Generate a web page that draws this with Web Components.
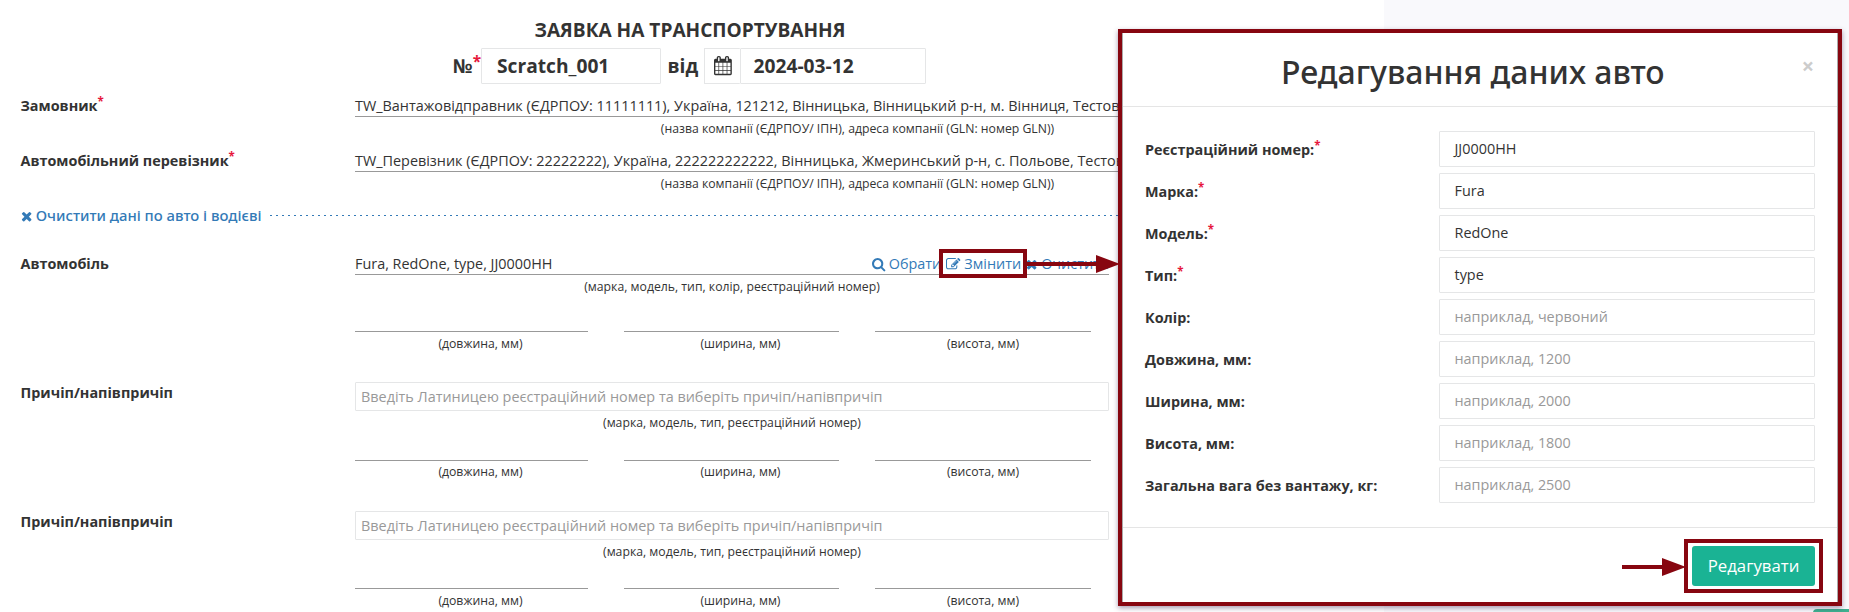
<!DOCTYPE html>
<html lang="uk">
<head>
<meta charset="utf-8">
<title>Заявка на транспортування</title>
<style>
html, body { margin: 0; height: 612px; overflow: hidden; background: #fff; }
body { font: 14.4px/20px "Open Sans", "Noto Sans", sans-serif; color: #333; }
</style>
</head>
<body>
<app-page></app-page>
<script>
const define = (name, html) => customElements.define(name, class extends HTMLElement {
  connectedCallback() {
    if (this.shadowRoot) return;
    const t = document.createElement('template');
    t.innerHTML = typeof html === 'function' ? html(this) : html;
    this.attachShadow({ mode: 'open' }).append(t.content.cloneNode(true));
  }
});

/* Glyphs on the Font Awesome 4 grid: 1792 units per em, y axis flipped */
const ICONS = {
  times: [1408, 'M1298 214q0-40-28-68l-136-136q-28-28-68-28t-68 28l-294 294-294-294q-28-28-68-28t-68 28l-136 136q-28 28-28 68t28 68l294 294-294 294q-28 28-28 68t28 68l136 136q28 28 68 28t68-28l294-294 294 294q28 28 68 28t68-28l136-136q28-28 28-68t-28-68l-294-294 294-294q28-28 28-68z'],
  search: [1664, 'M1152 704q0 185-131.500 316.500t-316.500 131.500-316.500-131.500-131.500-316.500 131.500-316.500 316.500-131.500 316.500 131.500 131.500 316.500zM1664-128q0-52-38-90t-90-38q-54 0-90 38l-343 342q-179-124-399-124-143 0-273.500 55.500t-225 150-150 225-55.500 273.500 55.500 273.500 150 225 225 150 273.500 55.500 273.500-55.500 225-150 150-225 55.500-273.500q0-220-124-399l343-343q37-37 37-90z'],
  edit: [1792, 'M888 352l116 116-152 152-116-116v-56h96v-96h56zM1328 1072q-16 16-33-1l-350-350q-17-17-1-33t33 1l350 350q17 17 1 33zM1408 478v-190q0-119-84.500-203.500t-203.500-84.500h-832q-119 0-203.500 84.500t-84.500 203.500v832q0 119 84.500 203.500t203.500 84.500h832q63 0 117-25 15-7 18-23 3-17-9-29l-49-49q-14-14-32-8-23 6-45 6h-832q-66 0-113-47t-47-113v-832q0-66 47-113t113-47h832q66 0 113 47t47 113v126q0 13 9 22l64 64q15 15 35 7t20-29zM1312 1216l288-288-672-672h-288v288zM1756 1084l-92-92-288 288 92 92q28 28 68 28t68-28l152-152q28-28 28-68t-28-68z'],
  calendar: [1664, 'M128-128h288v288h-288v-288zM480-128h320v288h-320v-288zM128 224h288v320h-288v-320zM480 224h320v320h-320v-320zM128 608h288v288h-288v-288zM864-128h320v288h-320v-288zM480 608h320v288h-320v-288zM1248-128h288v288h-288v-288zM864 224h320v320h-320v-320zM512 1088v288q0 13-9.500 22.500t-22.500 9.500h-64q-13 0-22.500-9.500t-9.500-22.500v-288q0-13 9.500-22.500t22.500-9.500h64q13 0 22.500 9.500t9.500 22.500zM1248 224h288v320h-288v-320zM864 608h320v288h-320v-288zM1248 608h288v288h-288v-288zM1280 1088v288q0 13-9.500 22.500t-22.500 9.500h-64q-13 0-22.500-9.500t-9.500-22.500v-288q0-13 9.500-22.500t22.500-9.500h64q13 0 22.500 9.500t9.500 22.500zM1664 1152v-1280q0-52-38-90t-90-38h-1408q-52 0-90 38t-38 90v1280q0 52 38 90t90 38h128v96q0 66 47 113t113 47h64q66 0 113-47t47-113v-96h384v96q0 66 47 113t113 47h64q66 0 113-47t47-113v-96h128q52 0 90-38t38-90z']
};
define('fa-icon', el => {
  const [w, d] = ICONS[el.getAttribute('name')];
  const s = +(el.getAttribute('size') || 14.4);
  return `<style>:host{display:inline-block;vertical-align:-2px;line-height:0}svg{display:block;overflow:visible}</style>
  <svg width="${w * s / 1792}" height="${s}" viewBox="0 0 ${w} 1792"><path fill="currentColor" transform="translate(0 1536) scale(1 -1)" d="${d}"/></svg>`;
});

define('req-mark', `<style>:host{color:#e6173c;font-weight:700;font-size:.8em;line-height:0;position:relative;top:-.4em}</style>*`);

define('form-head', `<style>
:host{display:block;width:1380px;padding-top:18px;font-weight:700;font-size:19.2px}
h1{margin:0;font-size:19.1px;line-height:24px;text-align:center}
.row{display:flex;align-items:center;height:36px;margin-top:6px;padding-left:453px}
.row>*{flex:none}
.box{box-sizing:border-box;height:36px;border:1px solid #e5e6e7;border-radius:1px;line-height:34px;padding-left:15px}
.num{width:180px}
.no{width:28px;white-space:nowrap}
.vid{margin-left:6.5px;width:36.5px}
.cal{width:36px;padding:0 0 0 9px;display:flex;align-items:center;border-right:0}
.date{width:186px;padding-left:12.5px}
</style>
<h1>ЗАЯВКА НА ТРАНСПОРТУВАННЯ</h1>
<div class="row"><span class="no">№<req-mark></req-mark></span><div class="box num">Scratch_001</div><span class="vid">від</span><div class="box cal"><fa-icon name="calendar" size="19.2"></fa-icon></div><div class="box date">2024-03-12</div></div>`);

define('form-row', `<style>
:host{display:grid;grid-template-columns:334.5px 754px;padding-left:20.5px}
.l{font-weight:700;line-height:22px}
</style><div class="l"><slot name="label"></slot></div><div><slot></slot></div>`);

define('line-value', `<style>
:host{display:flex;justify-content:space-between;box-sizing:border-box;height:22px;line-height:22px;border-bottom:1px solid #999;white-space:nowrap}
</style><slot></slot>`);

define('hint-text', `<style>:host{display:block;font-size:12.24px;line-height:17px;text-align:center;white-space:nowrap}</style><slot></slot>`);

define('link-action', el => `<style>:host{color:#337ab7;white-space:nowrap}</style><fa-icon name="${el.getAttribute('icon')}"></fa-icon> <slot></slot>`);

define('size-fields', `<style>
:host{display:grid;grid-template-columns:233px 215px 216px;column-gap:36px}
hint-text{border-top:1px solid #999;padding-top:var(--hint-gap,3px)}
.shift{padding-left:18px}
</style>
<hint-text class="shift">(довжина, мм)</hint-text>
<hint-text class="shift">(ширина, мм)</hint-text>
<hint-text>(висота, мм)</hint-text>`);

define('trailer-row', `<style>
:host{display:block;height:129px}
.in{box-sizing:border-box;height:29px;border:1px solid #e5e6e7;border-radius:1px;padding-left:5px;line-height:27px;color:#999}
hint-text{padding-top:3px}
size-fields{margin-top:var(--size-gap,29px)}
</style>
<form-row><span slot="label">Причіп/напівпричіп</span>
<div class="in">Введіть Латиницею реєстраційний номер та виберіть причіп/напівпричіп</div>
<hint-text>(марка, модель, тип, реєстраційний номер)</hint-text>
<size-fields></size-fields></form-row>`);

define('order-form', `<style>
:host{display:block;width:1384px;height:612px;overflow:hidden;background:#fff}
.co{height:55px}
.co line-value{width:1009px}.co hint-text{width:1005px;padding-top:3px}
.first{margin-top:11px}
.clear{display:flex;align-items:center;height:20px;margin:0 0 0 20.5px}
.clear link-action{font:500 14.85px/20px "Noto Sans","Open Sans",sans-serif}
.dash{flex:1;height:1px;margin:1px 0 0 8px;background:repeating-linear-gradient(90deg,#337ab7 0 2px,transparent 2px 6px)}
.car{margin-top:28px;height:129px}
.car hint-text{padding-top:3px}
.acts{display:flex;gap:5px}
.car size-fields{margin-top:36px}
.t1{--hint-gap:2px}
.t2{--size-gap:28px}
</style>
<form-head></form-head>
<form-row class="co first"><span slot="label">Замовник<req-mark></req-mark></span><line-value>TW_Вантажовідправник (ЄДРПОУ: 11111111), Україна, 121212, Вінницька, Вінницький р-н, м. Вінниця, Тестова</line-value><hint-text>(назва компанії (ЄДРПОУ/ ІПН), адреса компанії (GLN: номер GLN))</hint-text></form-row>
<form-row class="co"><span slot="label">Автомобільний перевізник<req-mark></req-mark></span><line-value>TW_Перевізник (ЄДРПОУ: 22222222), Україна, 222222222222, Вінницька, Жмеринський р-н, с. Польове, Тестова</line-value><hint-text>(назва компанії (ЄДРПОУ/ ІПН), адреса компанії (GLN: номер GLN))</hint-text></form-row>
<div class="clear"><link-action icon="times">Очистити дані по авто і водієві</link-action><div class="dash"></div></div>
<form-row class="car"><span slot="label">Автомобіль</span><line-value><span>Fura, RedOne, type, JJ0000HH</span><span class="acts"><link-action icon="search">Обрати</link-action><link-action icon="edit">Змінити</link-action><link-action icon="times">Очистити</link-action></span></line-value><hint-text>(марка, модель, тип, колір, реєстраційний номер)</hint-text><size-fields></size-fields></form-row>
<trailer-row class="t1"></trailer-row>
<trailer-row class="t2"></trailer-row>`);

define('modal-field', el => `<style>
:host{display:grid;grid-template-columns:294px 376px;height:36px;margin-bottom:6px}
.l{font-weight:700;line-height:20px;padding-top:9px}
.i{box-sizing:border-box;border:1px solid #e5e6e7;border-radius:1px;padding-left:14.5px;line-height:33px;color:#333}
.ph{color:#999}
</style><div class="l">${el.getAttribute('label')}${el.hasAttribute('required') ? '<req-mark></req-mark>' : ''}</div>
<div class="i ${el.hasAttribute('placeholder') ? 'ph' : ''}">${el.getAttribute('placeholder') || el.getAttribute('value')}</div>`);

define('edit-modal', `<style>
:host{display:block;box-sizing:border-box;width:724px;height:577px;border:4px solid #870610;background:#fff;box-shadow:0 2px 5px rgba(60,30,80,.45)}
.in{box-sizing:border-box;height:100%;border:solid #aaa;border-width:0 1px}
header{box-sizing:border-box;height:74px;border-bottom:1px solid #e5e5e5;display:flex;padding:20px 23px 0 21px}
h2{margin:0;flex:1;font:500 32px/37px "Noto Sans","Open Sans",sans-serif;text-align:center}
.x{color:#ccc;font-weight:700;font-size:21.6px;line-height:26px}
main{padding:24px 22px 0}
footer{border-top:1px solid #e5e5e5;margin-top:24px;display:flex;justify-content:flex-end;padding:18px 22px 0 0}
.btn{box-sizing:border-box;width:123px;height:40px;border-radius:3px;background:#1ab394;color:#fff;font-size:16.8px;line-height:40px;text-align:center}
</style>
<div class="in">
<header><h2>Редагування даних авто</h2><span class="x">×</span></header>
<main>
<modal-field label="Реєстраційний номер:" required value="JJ0000HH"></modal-field>
<modal-field label="Марка:" required value="Fura"></modal-field>
<modal-field label="Модель:" required value="RedOne"></modal-field>
<modal-field label="Тип:" required value="type"></modal-field>
<modal-field label="Колір:" placeholder="наприклад, червоний"></modal-field>
<modal-field label="Довжина, мм:" placeholder="наприклад, 1200"></modal-field>
<modal-field label="Ширина, мм:" placeholder="наприклад, 2000"></modal-field>
<modal-field label="Висота, мм:" placeholder="наприклад, 1800"></modal-field>
<modal-field label="Загальна вага без вантажу, кг:" placeholder="наприклад, 2500"></modal-field>
</main>
<footer><div class="btn">Редагувати</div></footer>
</div>`);

define('mark-layer', `<style>:host{display:block;pointer-events:none}svg{display:block}</style>
<svg width="1849" height="612"><g fill="none" stroke="#870610" stroke-width="4">
<rect x="941" y="251" width="84" height="25"/><path d="M1026 264H1098"/><rect x="1686" y="541" width="135" height="50"/><path d="M1622 567H1664"/></g>
<path fill="#870610" d="M1096 255l24 9-24 9zM1662 558l24 9-24 9z"/></svg>`);

define('app-page', `<style>
:host{display:block;position:relative;width:1849px;height:612px;overflow:hidden;background:#f9f9fc}
edit-modal{position:absolute;left:1118px;top:29px}
mark-layer{position:absolute;left:0;top:0}
.fab{position:absolute;left:1813px;top:609px;width:60px;height:20px;border-radius:4px;background:#3fb08f}
</style>
<order-form></order-form><div class="fab"></div><edit-modal></edit-modal><mark-layer></mark-layer>`);
</script>
</body>
</html>
